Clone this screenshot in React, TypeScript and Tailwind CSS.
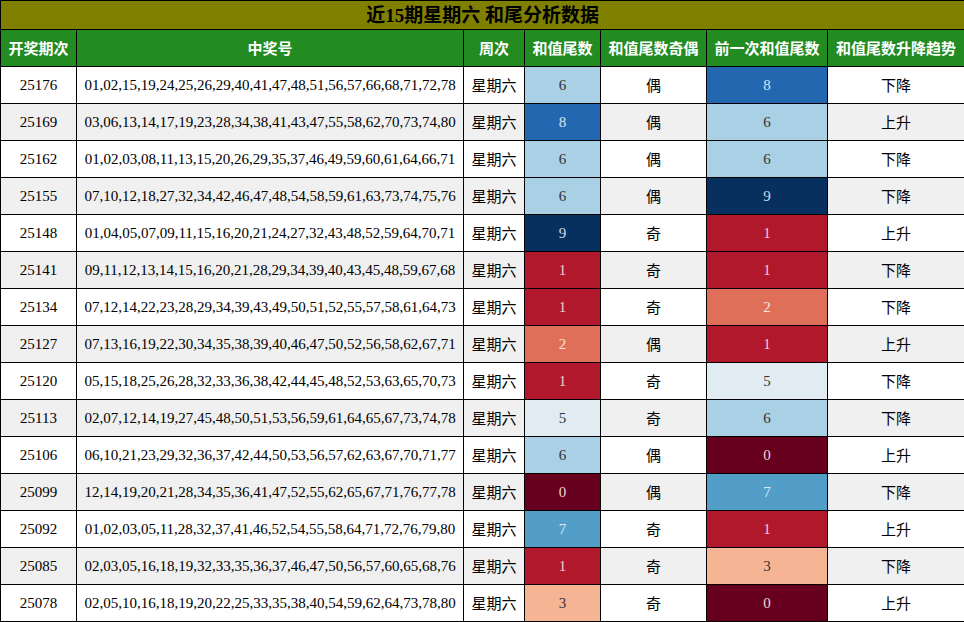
const rows: [string, string, number, string, number, string][] = [
  ["25176","01,02,15,19,24,25,26,29,40,41,47,48,51,56,57,66,68,71,72,78",6,"偶",8,"下降"],
  ["25169","03,06,13,14,17,19,23,28,34,38,41,43,47,55,58,62,70,73,74,80",8,"偶",6,"上升"],
  ["25162","01,02,03,08,11,13,15,20,26,29,35,37,46,49,59,60,61,64,66,71",6,"偶",6,"下降"],
  ["25155","07,10,12,18,27,32,34,42,46,47,48,54,58,59,61,63,73,74,75,76",6,"偶",9,"下降"],
  ["25148","01,04,05,07,09,11,15,16,20,21,24,27,32,43,48,52,59,64,70,71",9,"奇",1,"上升"],
  ["25141","09,11,12,13,14,15,16,20,21,28,29,34,39,40,43,45,48,59,67,68",1,"奇",1,"下降"],
  ["25134","07,12,14,22,23,28,29,34,39,43,49,50,51,52,55,57,58,61,64,73",1,"奇",2,"下降"],
  ["25127","07,13,16,19,22,30,34,35,38,39,40,46,47,50,52,56,58,62,67,71",2,"偶",1,"上升"],
  ["25120","05,15,18,25,26,28,32,33,36,38,42,44,45,48,52,53,63,65,70,73",1,"奇",5,"下降"],
  ["25113","02,07,12,14,19,27,45,48,50,51,53,56,59,61,64,65,67,73,74,78",5,"奇",6,"下降"],
  ["25106","06,10,21,23,29,32,36,37,42,44,50,53,56,57,62,63,67,70,71,77",6,"偶",0,"上升"],
  ["25099","12,14,19,20,21,28,34,35,36,41,47,52,55,62,65,67,71,76,77,78",0,"偶",7,"下降"],
  ["25092","01,02,03,05,11,28,32,37,41,46,52,54,55,58,64,71,72,76,79,80",7,"奇",1,"上升"],
  ["25085","02,03,05,16,18,19,32,33,35,36,37,46,47,50,56,57,60,65,68,76",1,"奇",3,"下降"],
  ["25078","02,05,10,16,18,19,20,22,25,33,35,38,40,54,59,62,64,73,78,80",3,"奇",0,"上升"],
];

const cellColor: Record<number, string> = {
  0: "bg-[#67001f] text-[#f0d8dc]",
  1: "bg-[#b2182b] text-[#f4d0d4]",
  2: "bg-[#df6f58] text-[#fbe4dc]",
  3: "bg-[#f5b494] text-[#333333]",
  5: "bg-[#e1ecf2] text-[#333333]",
  6: "bg-[#a9d0e4] text-[#333333]",
  7: "bg-[#529ec9] text-[#dbeaf4]",
  8: "bg-[#2367b0] text-[#d6e4f4]",
  9: "bg-[#08305f] text-[#d0dcea]",
};

const serif = "font-[family-name:Liberation_Serif,Noto_Sans_CJK_SC,serif]";
const cjk = "font-[family-name:Noto_Sans_CJK_SC,sans-serif]";

export default function App() {
  return (
    <div className="w-[964px] h-[622px] bg-white overflow-hidden">
      <table className="border-collapse table-fixed w-[964px]">
        <colgroup>
          <col className="w-[76px]" />
          <col className="w-[387px]" />
          <col className="w-[61px]" />
          <col className="w-[76px]" />
          <col className="w-[106px]" />
          <col className="w-[121px]" />
          <col className="w-[137px]" />
        </colgroup>
        <thead>
          <tr className="h-[29px]">
            <th colSpan={7} className={`border border-black bg-[#808000] text-black text-[19px] font-bold leading-none ${serif}`}>
              近15期星期六 和尾分析数据
            </th>
          </tr>
          <tr className="h-[37px]">
            {["开奖期次","中奖号","周次","和值尾数","和值尾数奇偶","前一次和值尾数","和值尾数升降趋势"].map(h => (
              <th key={h} className={`border border-black bg-[#228b22] text-white text-[15px] font-bold ${cjk}`}>{h}</th>
            ))}
          </tr>
        </thead>
        <tbody>
          {rows.map((r, i) => {
            const bg = i % 2 === 1 ? "bg-[#f0f0f0]" : "bg-white";
            return (
              <tr key={r[0]} className="h-[37px] text-[15px] text-black">
                <td className={`border border-black text-center font-normal ${bg} ${serif}`}>{r[0]}</td>
                <td className={`border border-black text-center font-normal ${bg} ${serif} text-[15px] whitespace-nowrap overflow-hidden`}>{r[1]}</td>
                <td className={`border border-black text-center ${bg} ${cjk}`}>星期六</td>
                <td className={`border border-black text-center ${cellColor[r[2]]} ${serif}`}>{r[2]}</td>
                <td className={`border border-black text-center ${bg} ${cjk}`}>{r[3]}</td>
                <td className={`border border-black text-center ${cellColor[r[4]]} ${serif}`}>{r[4]}</td>
                <td className={`border border-black text-center ${bg} ${cjk}`}>{r[5]}</td>
              </tr>
            );
          })}
        </tbody>
      </table>
    </div>
  );
}
